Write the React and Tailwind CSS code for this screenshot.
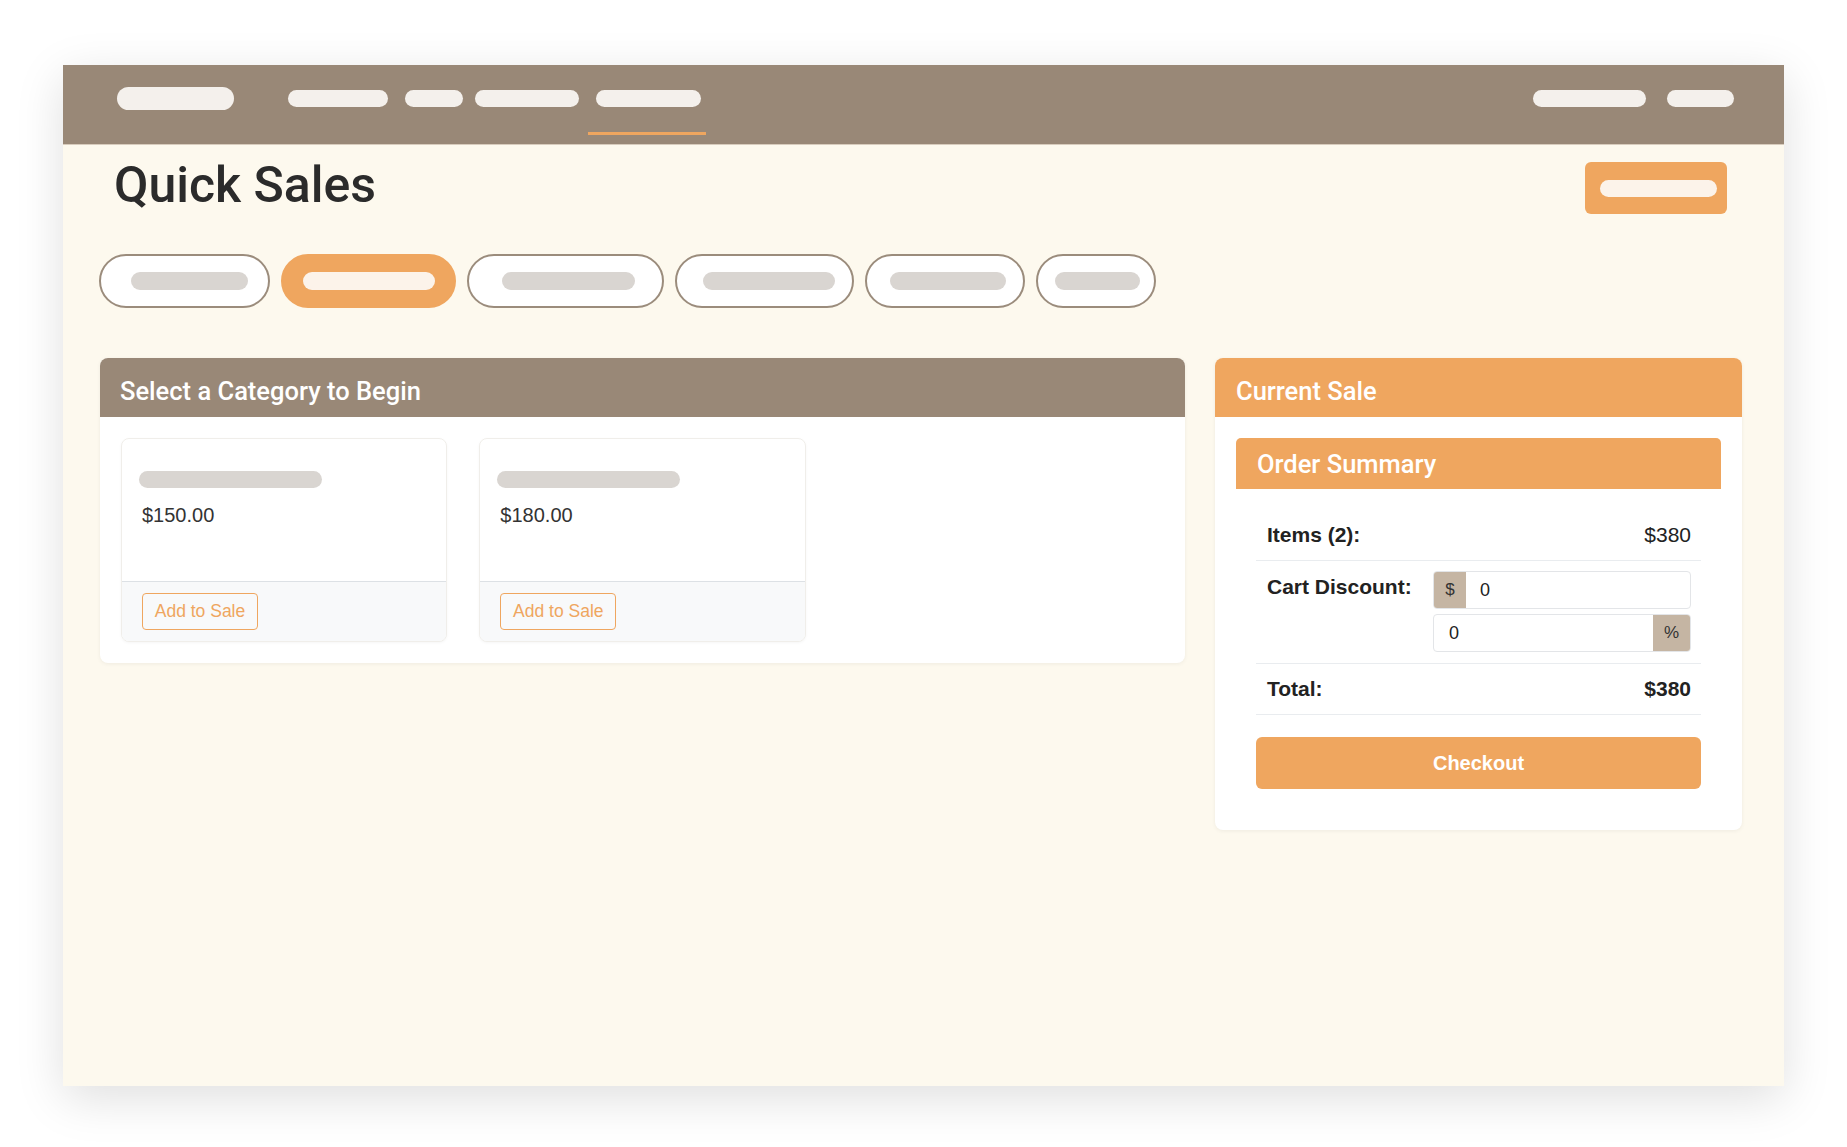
import React from 'react'

const navLinks = [
  { w: 'w-[100px]', ml: 'ml-[54px]' },
  { w: 'w-[58px]', ml: 'ml-[17px]' },
  { w: 'w-[104px]', ml: 'ml-[12px]' },
  { w: 'w-[105px]', ml: 'ml-[17px]', active: true },
]

const tabs = [
  { w: 'w-[171px]', pill: 'w-[117px]', pl: 'pl-[30px]' },
  { w: 'w-[175px]', pill: 'w-[132px]', pl: 'pl-[20px]', active: true },
  { w: 'w-[197px]', pill: 'w-[133px]', pl: 'pl-[33px]' },
  { w: 'w-[179px]', pill: 'w-[132px]', pl: 'pl-[26px]' },
  { w: 'w-[160px]', pill: 'w-[116px]', pl: 'pl-[23px]' },
  { w: 'w-[120px]', pill: 'w-[85px]', pl: 'pl-[17px]' },
]

const products = [{ price: '$150.00' }, { price: '$180.00' }]

const heading = "font-['Roboto',sans-serif] font-medium"

const NavBar = () => (
  <div className="flex h-[80px] items-start border-b border-[#d8ccbd] bg-[#998877] pl-[54px] pr-[50px] pt-[22px]">
    <div className="h-[23px] w-[117px] rounded-full bg-[#f4f0ec]" />
    {navLinks.map((link, i) => (
      <div key={i} className={`relative mt-[3px] ${link.ml}`}>
        <div className={`h-[17px] ${link.w} rounded-full bg-[#f4f0ec]`} />
        {link.active && (
          <div className="absolute left-[-8px] right-[-5px] top-[42px] h-[3px] bg-[#efa65f]" />
        )}
      </div>
    ))}
    <div className="ml-auto mt-[3px] flex gap-[21px]">
      <div className="h-[17px] w-[113px] rounded-full bg-[#f4f0ec]" />
      <div className="h-[17px] w-[67px] rounded-full bg-[#f4f0ec]" />
    </div>
  </div>
)

const ProductCard = ({ price }) => (
  <div className="overflow-hidden rounded-[8px] border border-[#f0eeea] bg-white shadow-[0_1px_3px_rgba(0,0,0,0.04)]">
    <div className="h-[142px] px-[20px] pt-[32px]">
      <div className="ml-[-3px] h-[17px] w-[183px] rounded-full bg-[#d9d5d1]" />
      <p className="mt-[13px] text-[20px] leading-[28px] text-[#333]">{price}</p>
    </div>
    <div className="h-[60px] border-t border-[#dde1e5] bg-[#f8f9fa] pl-[20px] pt-[11px]">
      <button className="h-[37px] w-[116px] rounded-[4px] border border-[#efa65f] text-[17.5px] text-[#efa65f]">
        Add to Sale
      </button>
    </div>
  </div>
)

const SummaryRow = ({ label, value, bold }) => (
  <div className="flex h-[51px] items-center justify-between border-b border-[#e9ecef] pl-[11px] pr-[10px] text-[21px] text-[#222]">
    <span className="font-bold">{label}</span>
    <span className={bold ? 'font-bold' : ''}>{value}</span>
  </div>
)

const CurrentSale = () => (
  <div className="w-[527px] self-start overflow-hidden rounded-[8px] bg-white shadow-[0_1px_4px_rgba(0,0,0,0.06)]">
    <div className={`flex h-[59px] items-center bg-[#efa65f] pl-[21px] pt-[8px] text-[25.5px] text-white ${heading}`}>
      Current Sale
    </div>
    <div className="p-[21px]">
      <div className={`flex h-[51px] items-center rounded-t-[5px] bg-[#efa65f] pl-[21px] pt-[2px] text-[25.5px] text-white ${heading}`}>
        Order Summary
      </div>
      <div className="px-[20px] pb-[20px] pt-[21px]">
        <SummaryRow label="Items (2):" value="$380" />
        <div className="flex border-b border-[#e9ecef] pb-[11px] pl-[11px] pr-[10px] pt-[10px]">
          <span className="mt-[1px] w-[166px] text-[21px] font-bold leading-[29px] text-[#222]">
            Cart Discount:
          </span>
          <div className="flex flex-1 flex-col gap-[5px]">
            <div className="flex h-[38px] overflow-hidden rounded-[4px] border border-[#e3e5e8]">
              <span className="flex w-[32px] items-center justify-center bg-[#c5b5a3] text-[17px] text-[#333]">$</span>
              <span className="flex flex-1 items-center pl-[14px] text-[18px] text-[#222]">0</span>
            </div>
            <div className="flex h-[38px] overflow-hidden rounded-[4px] border border-[#e3e5e8]">
              <span className="flex flex-1 items-center pl-[15px] text-[18px] text-[#222]">0</span>
              <span className="flex w-[37px] items-center justify-center bg-[#c5b5a3] text-[17px] text-[#333]">%</span>
            </div>
          </div>
        </div>
        <SummaryRow label="Total:" value="$380" bold />
        <button className="mt-[22px] h-[52px] w-full rounded-[6px] bg-[#efa65f] text-[20px] font-bold text-white">
          Checkout
        </button>
      </div>
    </div>
  </div>
)

export default function App() {
  return (
    <div className="min-h-screen bg-white pl-[63px] pt-[65px] font-['Liberation_Sans',Arial,sans-serif]">
      <div className="h-[1021px] w-[1721px] bg-[#fdf9ee] shadow-[0_12px_45px_rgba(0,0,0,0.13)]">
        <NavBar />

        <div className="flex items-start justify-between pl-[51px] pr-[57px] pt-[17px]">
          <h1 className={`mt-[-3px] text-[50px] leading-[52px] text-[#2b2b2b] ${heading}`}>Quick Sales</h1>
          <button className="flex h-[52px] w-[142px] items-center rounded-[6px] bg-[#efa65f] pl-[15px]">
            <span className="h-[17px] w-[117px] rounded-full bg-[#fcf3ea]" />
          </button>
        </div>

        <div className="mt-[40px] flex gap-[11px] pl-[36px]">
          {tabs.map((tab, i) => (
            <div
              key={i}
              className={`flex h-[54px] ${tab.w} ${tab.pl} items-center rounded-full border-2 ${
                tab.active ? 'border-[#efa65f] bg-[#efa65f]' : 'border-[#9b8c7c] bg-white'
              }`}
            >
              <span className={`h-[18px] ${tab.pill} rounded-full ${tab.active ? 'bg-[#fcf3ea]' : 'bg-[#d9d5d1]'}`} />
            </div>
          ))}
        </div>

        <div className="mt-[50px] flex gap-[30px] pl-[37px] pr-[42px]">
          <div className="flex-1 self-start overflow-hidden rounded-[8px] bg-white shadow-[0_1px_4px_rgba(0,0,0,0.06)]">
            <div className={`flex h-[59px] items-center bg-[#998877] pl-[20px] pt-[8px] text-[25.5px] text-white ${heading}`}>
              Select a Category to Begin
            </div>
            <div className="grid grid-cols-3 gap-[32px] p-[21px]">
              {products.map((p, i) => (
                <ProductCard key={i} price={p.price} />
              ))}
            </div>
          </div>
          <CurrentSale />
        </div>
      </div>
    </div>
  )
}
